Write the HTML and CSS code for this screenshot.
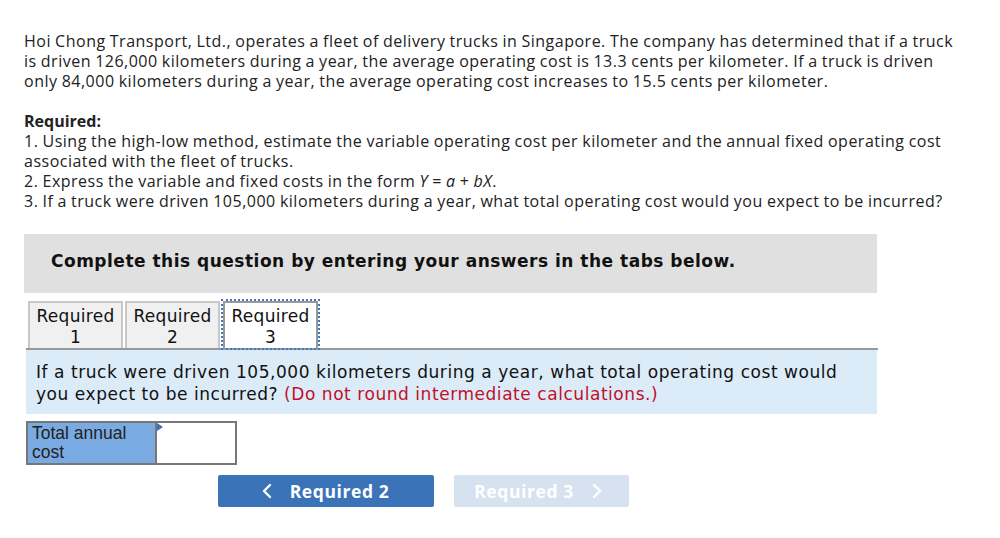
FILE: index.html
```html
<!DOCTYPE html>
<html>
<head>
<meta charset="utf-8">
<link rel="stylesheet" href="styles.css">
</head>
<body>
<div class="page">
  <p class="intro">Hoi Chong Transport, Ltd., operates a fleet of delivery trucks in Singapore. The company has determined that if a truck is driven 126,000 kilometers during a year, the average operating cost is 13.3 cents per kilometer. If a truck is driven only 84,000 kilometers during a year, the average operating cost increases to 15.5 cents per kilometer.</p>
  <div class="reqs">
    <div class="req-title">Required:</div>
    <div>1. Using the high-low method, estimate the variable operating cost per kilometer and the annual fixed operating cost associated with the fleet of trucks.</div>
    <div>2. Express the variable and fixed costs in the form <i>Y</i> = <i>a</i> + <i>bX</i>.</div>
    <div>3. If a truck were driven 105,000 kilometers during a year, what total operating cost would you expect to be incurred?</div>
  </div>
  <div class="banner">Complete this question by entering your answers in the tabs below.</div>
  <div class="tabs">
    <div class="tab">Required<br>1</div>
    <div class="tab">Required<br>2</div>
    <div class="tab active">Required<br>3</div>
  </div>
  <div class="panel">If a truck were driven 105,000 kilometers during a year, what total operating cost would you expect to be incurred? <span class="warn">(Do not round intermediate calculations.)</span></div>
  <table class="answer">
    <tr>
      <td class="label">Total annual cost</td>
      <td class="input"><span class="flag"></span></td>
    </tr>
  </table>
  <div class="nav">
    <button class="btn prev"><svg width="12" height="16" viewBox="0 0 12 16"><path d="M9 2 L3 8 L9 14" fill="none" stroke="#fff" stroke-width="2.4" stroke-linecap="round" stroke-linejoin="round"/></svg><span>Required 2</span></button>
    <button class="btn next"><span>Required 3</span><svg width="12" height="16" viewBox="0 0 12 16"><path d="M3 2 L9 8 L3 14" fill="none" stroke="#fff" stroke-width="2.4" stroke-linecap="round" stroke-linejoin="round"/></svg></button>
  </div>
</div>
</body>
</html>
```
FILE: styles.css
```css
html, body { margin: 0; padding: 0; background: #fff; }
.page {
  padding: 31px 0 0 24px;
  width: 940px;
  font-family: "Open Sans", "Liberation Sans", sans-serif;
  font-size: 16px;
  color: #222;
}
.intro { margin: 0; line-height: 20px; letter-spacing: 0.5px; word-spacing: -0.5px; }
.reqs { margin-top: 20px; line-height: 20px; letter-spacing: 0.5px; word-spacing: -0.5px; }
.req-title { font-weight: 700; letter-spacing: 0; }
.banner {
  margin-top: 23px;
  width: 853px;
  height: 59px;
  background: #e0e0e0;
  box-sizing: border-box;
  padding: 17px 0 0 27px;
  font-family: "DejaVu Sans", Verdana, sans-serif;
  font-weight: 700;
  font-size: 17px;
  letter-spacing: 0.5px;
  color: #111;
}
.tabs {
  display: flex;
  margin-top: 8px;
  margin-left: 2px;
  width: 852px;
  border-bottom: 2px solid #999;
  font-family: "DejaVu Sans", Verdana, sans-serif;
  font-size: 17px;
  letter-spacing: 0.3px;
  color: #111;
}
.tab {
  width: 95px;
  height: 47px;
  box-sizing: border-box;
  margin-left: 2px;
  border: 2px solid #c8c8c8;
  border-bottom: none;
  background: #f0f0f0;
  text-align: center;
  line-height: 21px;
  padding-top: 3px;
}
.tab.active {
  background: #fff;
  border-color: #999;
  outline: 2px dotted #3b78c9;
  outline-offset: 0;
  margin-left: 3px;
}
.panel {
  margin-left: 2px;
  width: 851px;
  box-sizing: border-box;
  background: #dbebf8;
  padding: 11px 10px 9px 10px;
  font-family: "DejaVu Sans", Verdana, sans-serif;
  font-size: 17px;
  letter-spacing: 0.55px;
  line-height: 22px;
  color: #111;
}
.warn { color: #c0102a; line-height: 22px; }
.answer {
  margin: 7px 0 0 2px;
  border-collapse: collapse;
  border: 2px solid #777;
}
.answer td { padding: 0; border: 2px solid #777; height: 40px; vertical-align: top; }
.label {
  width: 129px;
  background: #7aaae2;
  font-family: "Liberation Sans", Arial, sans-serif;
  font-size: 17.5px;
  line-height: 19px;
  padding: 1px 4px 0 4px !important;
  box-sizing: border-box;
  color: #222;
}
.input { width: 78px; position: relative; background: #fff; }
.flag {
  position: absolute; left: 0; top: 0;
  width: 0; height: 0;
  border-top: 4px solid transparent;
  border-bottom: 4px solid transparent;
  border-left: 6px solid #3b73b9;
}
.nav {
  display: flex;
  gap: 20px;
  margin: 10px 0 0 194px;
}
.btn {
  height: 32px;
  border: none;
  border-radius: 2px;
  display: flex;
  align-items: center;
  justify-content: center;
  gap: 17px;
  font-family: "Open Sans", "Liberation Sans", sans-serif;
  font-weight: 700;
  font-size: 17.5px;
  letter-spacing: 0.6px;
  color: #fff;
  padding: 0;
}
.prev { width: 216px; background: #3b73b9; padding-right: 2px; }
.next { width: 175px; background: #d7e2f0; padding-right: 6px; }
```
